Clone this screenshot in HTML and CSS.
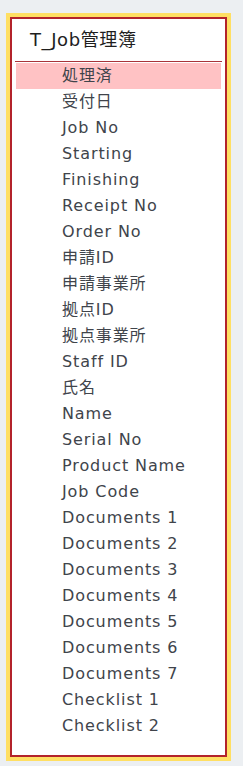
FILE: index.html
```html
<!DOCTYPE html>
<html lang="ja">
<head>
    <meta charset="UTF-8">
    <meta name="viewport" content="width=device-width, initial-scale=1.0">
    <title>T_Job管理簿</title>
    <link rel="stylesheet" href="styles.css">
</head>
<body>
    <div class="frame">
        <div class="panel">
            <div class="panel-title">T_Job管理簿</div>
            <ul class="field-list">
                <li class="field selected">処理済</li>
                <li class="field">受付日</li>
                <li class="field">Job No</li>
                <li class="field">Starting</li>
                <li class="field">Finishing</li>
                <li class="field">Receipt No</li>
                <li class="field">Order No</li>
                <li class="field">申請ID</li>
                <li class="field">申請事業所</li>
                <li class="field">拠点ID</li>
                <li class="field">拠点事業所</li>
                <li class="field">Staff ID</li>
                <li class="field">氏名</li>
                <li class="field">Name</li>
                <li class="field">Serial No</li>
                <li class="field">Product Name</li>
                <li class="field">Job Code</li>
                <li class="field">Documents 1</li>
                <li class="field">Documents 2</li>
                <li class="field">Documents 3</li>
                <li class="field">Documents 4</li>
                <li class="field">Documents 5</li>
                <li class="field">Documents 6</li>
                <li class="field">Documents 7</li>
                <li class="field">Checklist 1</li>
                <li class="field">Checklist 2</li>
            </ul>
        </div>
    </div>
</body>
</html>
```

FILE: styles.css
```css
body {
    margin: 0;
    background-color: #eceff2;
    font-family: "DejaVu Sans", "Noto Sans CJK JP", sans-serif;
    font-size: 16px;
    letter-spacing: 0.9px;
}
.frame {
    box-sizing: border-box;
    width: 225px;
    height: 748px;
    margin: 13px 0 0 6px;
    border: 4px solid #ffdf63;
}
.panel {
    box-sizing: border-box;
    height: 100%;
    border: 2px solid #b3232b;
    background: white;
}
.panel-title {
    height: 42px;
    line-height: 42px;
    padding-left: 18px;
    font-size: 18px;
    letter-spacing: 0.6px;
    color: #1e1e1e;
}
.field-list {
    list-style: none;
    margin: 0 3px;
    padding: 1px 1px 0;
    border-top: 1px solid #a8343a;
}
.field {
    height: 26px;
    line-height: 26px;
    padding-left: 46px;
    color: #40444b;
}
.selected {
    background: #ffc2c4;
}
```
